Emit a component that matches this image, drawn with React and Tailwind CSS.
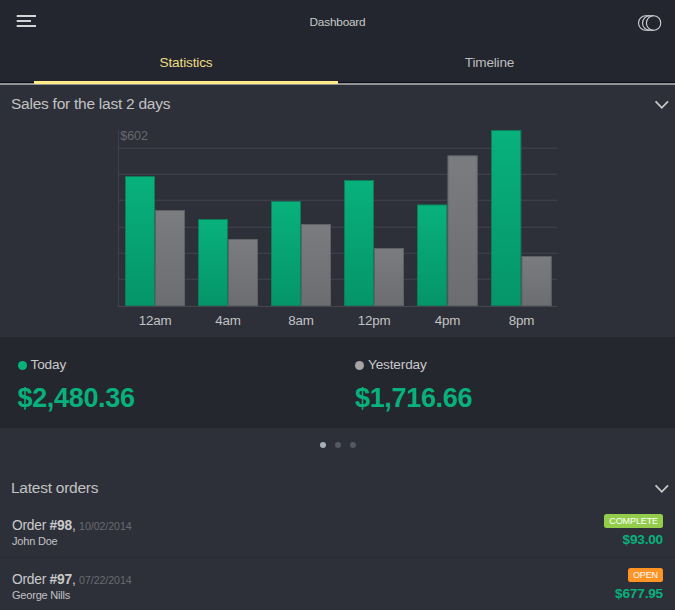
const groups = [
  { label: '12am', x: 125, w: 30, today: 176, yesterday: 210 },
  { label: '4am', x: 198, w: 30, today: 219, yesterday: 239 },
  { label: '8am', x: 271, w: 30, today: 201, yesterday: 224 },
  { label: '12pm', x: 344, w: 30, today: 180, yesterday: 248 },
  { label: '4pm', x: 417, w: 30.4, today: 204.4, yesterday: 155.3 },
  { label: '8pm', x: 491, w: 30.4, today: 130, yesterday: 256 },
];
const gridLines = [148, 174, 200, 227, 253, 279];
const BASE = 306;

function Chevron() {
  return (
    <svg className="mt-[2px]" width="15" height="10" viewBox="0 0 15 10" fill="none" stroke="#c9c9cb" strokeWidth="1.8">
      <path d="M1.6 1.4 7.8 7.8 14 1.4" />
    </svg>
  );
}

function SectionTitle({ children }) {
  return (
    <div className="flex items-center justify-between pl-[11px] pr-[6px] h-[20px]">
      <h2 className="text-[15.5px] tracking-[-0.25px] leading-[20px] text-[#c2c2c4]">{children}</h2>
      <Chevron />
    </div>
  );
}

function Bar({ x, y, w, fill, stroke }) {
  return (
    <rect x={x + 0.5} y={y + 0.5} width={w - 1} height={BASE - y - 1} fill={fill} stroke={stroke} />
  );
}

function SalesChart() {
  return (
    <svg
      className="block"
      width="675"
      height="215"
      viewBox="0 122 675 215"
      fontFamily="'Liberation Sans', Arial, sans-serif"
    >
      <defs>
        <linearGradient id="today" x1="0" y1="0" x2="0" y2="1">
          <stop offset="0" stopColor="#08b17c" />
          <stop offset="1" stopColor="#059568" />
        </linearGradient>
        <linearGradient id="yesterday" x1="0" y1="0" x2="0" y2="1">
          <stop offset="0" stopColor="#7b7c80" />
          <stop offset="1" stopColor="#6c6d70" />
        </linearGradient>
      </defs>
      {gridLines.map((y) => (
        <rect key={y} x="118" y={y - 0.3} width="439" height="1.2" fill="#3f424e" />
      ))}
      <rect x="118" y="130" width="1" height="177" fill="#3f424e" />
      <rect x="118" y="306" width="439" height="1" fill="#444752" />
      <text x="120.3" y="140" fontSize="12.6" letterSpacing="-0.1" fill="#67696f">$602</text>
      {groups.map((g) => (
        <g key={g.label}>
          <Bar x={g.x} y={g.today} w={g.w} fill="url(#today)" stroke="#0c7c59" />
          <Bar x={g.x + g.w} y={g.yesterday} w={g.w} fill="url(#yesterday)" stroke="#606165" />
          <text x={g.x + g.w} y="325.4" fontSize="13.4" letterSpacing="-0.2" textAnchor="middle" fill="#c2c2c4">
            {g.label}
          </text>
        </g>
      ))}
    </svg>
  );
}

function Total({ label, value, dot }) {
  return (
    <div className="w-[337.5px] pl-[17.5px] pt-[19px]">
      <div className="flex items-center gap-[4px] h-[18px]">
        <span className={`size-[9px] rounded-full ${dot}`} />
        <span className="text-[13.6px] tracking-[-0.15px] leading-[18px] text-[#c9c9cb]">{label}</span>
      </div>
      <div className="mt-[8px] text-[27px] tracking-[-0.33px] leading-[32px] font-bold text-[#08b17c]">{value}</div>
    </div>
  );
}

function Order({ id, date, name, status, badge, amount }) {
  return (
    <div className="flex justify-between h-[54px] pt-[10px] pl-[12px] pr-[12px] border-b border-[#272a31]">
      <div className="pt-[3px]">
        <div className="text-[13.8px] tracking-[-0.25px] leading-[17px] text-[#c9c9cb]">
          Order <b>#{id}</b>, <span className="text-[10.6px] tracking-[-0.05px] text-[#696b71]">{date}</span>
        </div>
        <div className="text-[11px] tracking-[-0.2px] leading-[12px] text-[#c2c2c4]">{name}</div>
      </div>
      <div className="flex flex-col items-end">
        <span className={`h-[14px] px-[5px] rounded-[2.5px] text-[9px] tracking-[-0.1px] leading-[14.5px] text-white ${badge}`}>
          {status}
        </span>
        <span className="mt-[3px] text-[13.6px] tracking-[-0.18px] leading-[18px] font-bold text-[#08b17c]">{amount}</span>
      </div>
    </div>
  );
}

export default function App() {
  return (
    <div className="w-[675px] h-[610px] overflow-hidden bg-[#2d3039] font-['Liberation_Sans',Arial,sans-serif]">
      <header className="h-[83px] bg-[#23262e] flex flex-col">
        <div className="h-[44px] grid grid-cols-3 items-center">
          <svg className="ml-[16px] -mt-[2px]" width="20" height="14" viewBox="0 0 20 14" fill="#d3d3d8">
            <rect x="0.7" y="1" width="19.3" height="2" />
            <rect x="0.7" y="6" width="14.3" height="2" />
            <rect x="0.7" y="11" width="19.3" height="2" />
          </svg>
          <h1 className="text-center text-[11.8px] tracking-[-0.2px] leading-[16px] text-[#c9c9cb]">Dashboard</h1>
          <svg className="justify-self-end mr-[13px] mt-[2px]" width="25" height="18" viewBox="0 0 25 18" fill="none" stroke="#d3d3d8" strokeWidth="1.1">
            <circle cx="16.6" cy="9" r="7.2" />
            <path d="M16.6 1.8H8.7a7.2 7.2 0 0 0 0 14.4h7.9" />
            <path d="M12.7 1.8a7.2 7.2 0 0 0 0 14.4" />
          </svg>
        </div>
        <nav className="h-[39px] flex px-[34px] border-b border-[#0b0c12]">
          <div className="relative z-10 w-[304px] h-[40px] shrink-0 pt-[9px] text-center text-[13.6px] tracking-[-0.15px] leading-[20px] text-[#eedd83] border-b-[3px] border-[#ffeb88]">
            Statistics
          </div>
          <div className="w-[303px] pt-[9px] text-center text-[13.6px] tracking-[-0.2px] leading-[20px] text-[#bdbdbf]">Timeline</div>
        </nav>
      </header>
      <div className="h-[2px] bg-[#929397]" />
      <section className="pt-[9px]">
        <SectionTitle>Sales for the last 2 days</SectionTitle>
        <div className="mt-[8px]">
          <SalesChart />
        </div>
      </section>
      <section className="flex h-[91px] bg-[#24272e]">
        <Total label="Today" value="$2,480.36" dot="bg-[#08b17c]" />
        <Total label="Yesterday" value="$1,716.66" dot="bg-[#a5a5a5]" />
      </section>
      <div className="h-[34px] flex items-center justify-center gap-[9px]">
        <span className="size-[6px] rounded-full bg-[#a9aebb]" />
        <span className="size-[6px] rounded-full bg-[#535865]" />
        <span className="size-[6px] rounded-full bg-[#535865]" />
      </div>
      <section className="pt-[16px]">
        <SectionTitle>Latest orders</SectionTitle>
        <div className="mt-[6px]">
          <Order id="98" date="10/02/2014" name="John Doe" status="COMPLETE" badge="bg-[#93cd4b]" amount="$93.00" />
          <Order id="97" date="07/22/2014" name="George Nills" status="OPEN" badge="bg-[#ff9424]" amount="$677.95" />
        </div>
      </section>
    </div>
  );
}
